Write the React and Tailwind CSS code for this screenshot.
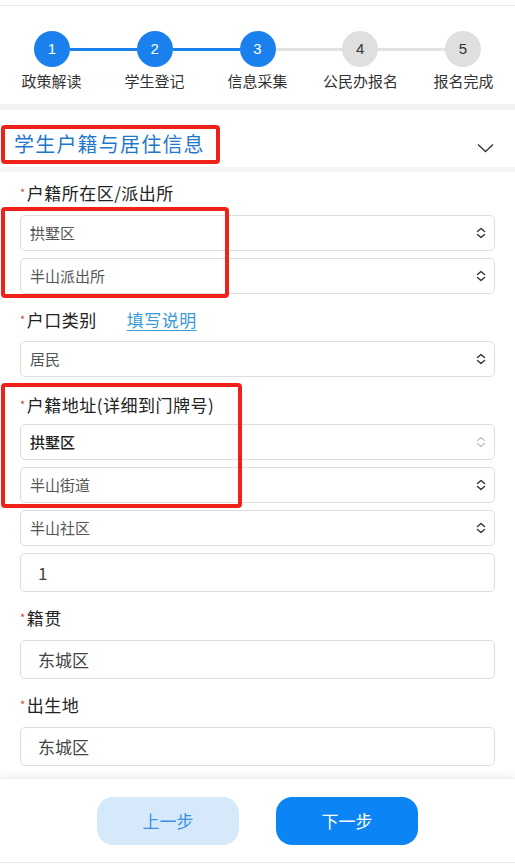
import React from 'react';

const steps = [
  { n: 1, label: '政策解读', done: true },
  { n: 2, label: '学生登记', done: true },
  { n: 3, label: '信息采集', done: true },
  { n: 4, label: '公民办报名', done: false },
  { n: 5, label: '报名完成', done: false },
];

const UpDown = ({ light }) => (
  <svg width="10" height="12" viewBox="0 0 10 12" fill="none">
    <path
      d="M1.5 4.5 L5 1.5 L8.5 4.5 M1.5 7.5 L5 10.5 L8.5 7.5"
      stroke={light ? '#c4c4c4' : '#333'}
      strokeWidth="1.4"
      strokeLinecap="round"
      strokeLinejoin="round"
    />
  </svg>
);

// select-like box
const Select = ({ value, dark, light }) => (
  <div className="h-[36px] rounded-[5px] border border-[#dedede] flex items-center justify-between pl-[9px] pr-[8px]">
    <span className={dark ? 'text-[15px] text-[#222] font-medium' : 'text-[15px] text-[#555]'}>{value}</span>
    <UpDown light={light} />
  </div>
);

const TextInput = ({ value }) => (
  <div className="h-[39px] rounded-[5px] border border-[#dedede] flex items-center pl-[17px]">
    <span className="text-[17px] text-[#444]">{value}</span>
  </div>
);

const Label = ({ children, extra }) => (
  <div className="h-[24px] flex items-center text-[17px] tracking-[0.5px] text-[#222]">
    <span className="text-[#e53935] text-[11px] self-start mt-[3px] mr-[1px]">*</span>
    {children}
    {extra}
  </div>
);

const App = () => {
  return (
    <div
      className="relative w-full h-[866px] bg-white flex flex-col overflow-hidden"
      style={{ fontFamily: '"Noto Sans CJK SC", "Noto Sans", sans-serif' }}
    >
      {/* Top line */}
      <div className="h-[5px]" />
      <div className="border-t border-[#e6e6e6]" />

      {/* Steps */}
      <div className="h-[98px] pt-[25px]">
        <div className="flex items-center px-[34px]">
          {steps.map((s, i) => (
            <React.Fragment key={s.n}>
              <div
                className={
                  s.done
                    ? 'w-[36px] h-[36px] rounded-full bg-[#1a80ee] text-white flex items-center justify-center text-[15px]'
                    : 'w-[36px] h-[36px] rounded-full bg-[#dfdfdf] text-[#333] flex items-center justify-center text-[15px]'
                }
                style={{ fontFamily: '"Liberation Sans", Arial, sans-serif' }}
              >
                {s.n}
              </div>
              {i < steps.length - 1 && (
                <div className={i < 2 ? 'flex-1 h-[3px] bg-[#1a80ee]' : 'flex-1 h-[3px] bg-[#e3e3e3]'} />
              )}
            </React.Fragment>
          ))}
        </div>
        <div className="grid grid-cols-5 mt-[2px]">
          {steps.map((s) => (
            <div key={s.n} className="text-center text-[15px] text-[#333] leading-[24px]">
              {s.label}
            </div>
          ))}
        </div>
      </div>

      <div className="h-[6px] bg-[#f2f2f2]" />

      {/* Section header */}
      <div className="h-[57px] flex items-start justify-between pl-[14px] pr-[21px] pt-[16px]">
        <div className="h-[36px] flex items-center text-[20px] tracking-[1.2px] text-[#1f78cc]">
          学生户籍与居住信息
        </div>
        <svg width="17" height="10" viewBox="0 0 17 10" fill="none" className="mt-[17px]">
          <path d="M1 1.5 L8.5 8.5 L16 1.5" stroke="#333" strokeWidth="1.3" />
        </svg>
      </div>

      <div className="h-[5px] bg-[#f4f4f4]" />

      {/* Form */}
      <div className="px-[20px] pt-[9px] flex flex-col">
        <Label>户籍所在区/派出所</Label>
        <div className="mt-[10px] flex flex-col gap-[7px]">
          <Select value="拱墅区" />
          <Select value="半山派出所" />
        </div>

        <div className="mt-[14px]">
          <Label
            extra={<span className="ml-[30px] text-[#3a9ad9] underline underline-offset-[3px]">填写说明</span>}
          >
            户口类别
          </Label>
        </div>
        <div className="mt-[9px]">
          <Select value="居民" />
        </div>

        <div className="mt-[16px]">
          <Label>户籍地址(详细到门牌号)</Label>
        </div>
        <div className="mt-[7px] flex flex-col gap-[7px]">
          <Select value="拱墅区" dark light />
          <Select value="半山街道" />
          <Select value="半山社区" />
          <TextInput value="1" />
        </div>

        <div className="mt-[14px]">
          <Label>籍贯</Label>
        </div>
        <div className="mt-[10px]">
          <TextInput value="东城区" />
        </div>

        <div className="mt-[14px]">
          <Label>出生地</Label>
        </div>
        <div className="mt-[10px]">
          <TextInput value="东城区" />
        </div>
      </div>

      {/* Footer */}
      <div className="mt-[12px] h-[84px] bg-white shadow-[0_-4px_8px_rgba(0,0,0,0.05)] border-t border-[#f0f0f0] flex items-center justify-center gap-[37px]">
        <button className="w-[142px] h-[48px] rounded-[16px] bg-[#d6e9fb] text-[#3b8fe4] text-[17px]">上一步</button>
        <button className="w-[142px] h-[48px] rounded-[16px] bg-[#0b84f5] text-white text-[17px]">下一步</button>
      </div>
      <div className="border-t border-[#e8e8e8]" />

      {/* Red annotation boxes */}
      <div className="absolute left-[1px] top-[125px] w-[219px] h-[39px] border-[4px] border-[#f0201a] rounded-[4px] pointer-events-none" />
      <div className="absolute left-[1px] top-[207px] w-[228px] h-[91px] border-[4px] border-[#f0201a] rounded-[4px] pointer-events-none" />
      <div className="absolute left-[1px] top-[383px] w-[241px] h-[125px] border-[4px] border-[#f0201a] rounded-[4px] pointer-events-none" />
    </div>
  );
};

export default App;
